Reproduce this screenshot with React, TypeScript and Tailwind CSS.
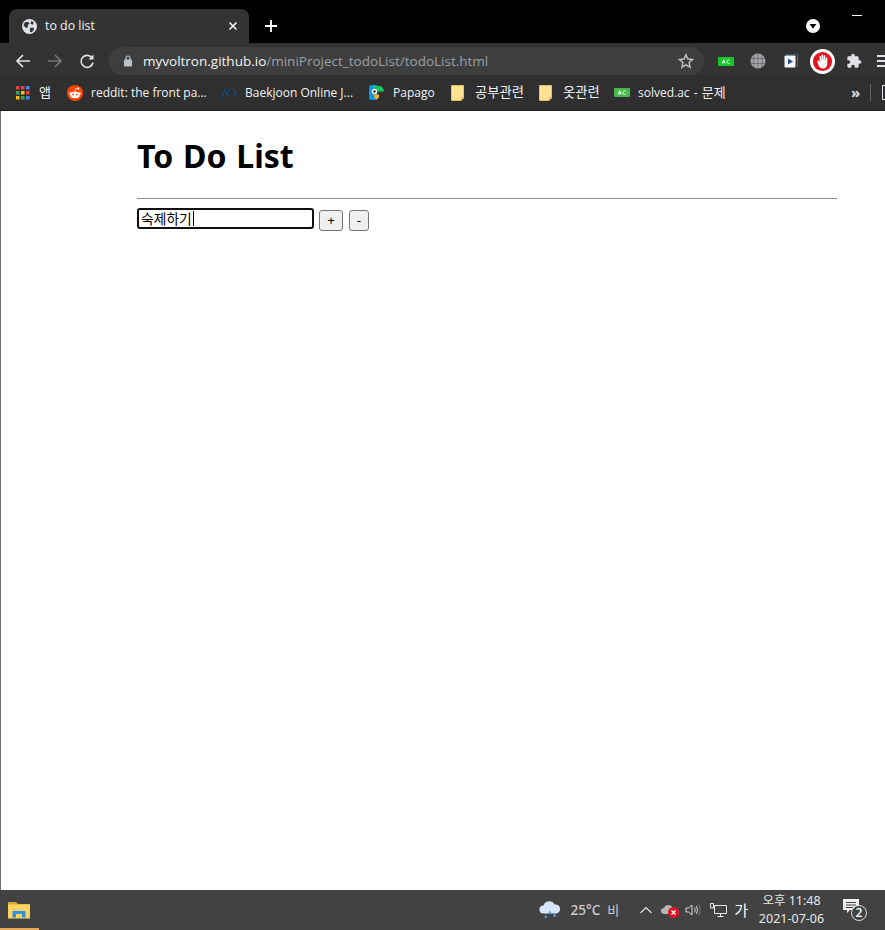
import React from "react";

const UI = { fontFamily: '"Open Sans", "Noto Sans CJK KR", sans-serif' };
const KR = { fontFamily: '"Noto Sans CJK KR", sans-serif' };
const NS = { fontFamily: '"Noto Sans", "Noto Sans CJK KR", sans-serif' };

function Folder() {
  return (
    <svg width="13" height="16" viewBox="0 0 13 16" className="shrink-0">
      <path d="M0.5 0.5H12.5V13L10 15.5H0.5Z" fill="#fde293" stroke="#e8c15c" />
      <path d="M12.5 12H9.500V15.500" fill="#e8c15c" />
    </svg>
  );
}

function AcBadge({ fill }: { fill: string }) {
  return (
    <svg width="16" height="9" viewBox="0 0 16 9" className="shrink-0">
      <rect width="16" height="9" rx="1" fill={fill} />
      <path d="M4.200 6.600 5.700 2.600 7.200 6.600M4.800 5.300H6.600" stroke="#fff" strokeWidth="0.9" fill="none" />
      <path d="M11.600 3.100A1.800 1.800 0 1 0 11.600 6.100" stroke="#fff" strokeWidth="0.9" fill="none" />
    </svg>
  );
}

function Bookmark({ icon, label, gap, width, text = "text-[12px]" }: { icon: React.ReactNode; label: React.ReactNode; gap: string; width: string; text?: string }) {
  return (
    <div className={`flex items-center shrink-0 ${gap} ${width}`}>
      {icon}
      <span className={`whitespace-nowrap text-[#f1f3f4] ${text}`}>{label}</span>
    </div>
  );
}

export default function App() {
  return (
    <div className="flex h-[930px] w-[885px] flex-col overflow-hidden bg-black" style={UI}>
      {/* tab strip */}
      <div className="flex h-[43px] shrink-0 items-end bg-black pl-[9px]">
        <div className="flex h-[34px] w-[240px] items-center rounded-t-[8px] bg-[#333333] pl-[13px] pr-[8px]">
          <svg width="15" height="15" viewBox="0 0 16 16" className="shrink-0">
            <circle cx="8" cy="8" r="8" fill="#dee1e6" />
            <path d="M3 3.500 6.500 3 8 5 6 6.500 6.500 8.500 4.500 9.500 1.500 7ZM10 2 12.500 3.500 11.500 6 9 5ZM8.500 9.500 12 9 13 11 10.500 14 8.500 13.500Z" fill="#333333" />
          </svg>
          <span className="ml-[8px] flex-1 text-[12.4px] text-[#f1f3f4]">to do list</span>
          <svg width="16" height="16" viewBox="0 0 16 16" className="shrink-0">
            <path d="M4.500 4.500 11.500 11.500M11.500 4.500 4.500 11.500" stroke="#f1f3f4" strokeWidth="1.600" />
          </svg>
        </div>
        <div className="flex h-[34px] items-center pl-[15px]">
          <svg width="14" height="14" viewBox="0 0 14 14">
            <path d="M7 1V13M1 7H13" stroke="#fff" strokeWidth="1.800" />
          </svg>
        </div>
        <div className="flex-1" />
        <div className="flex h-[43px] w-[79px] shrink-0">
          <div className="flex h-full w-[42px] items-end pb-[10px]">
            <svg width="14" height="14" viewBox="0 0 14 14">
              <circle cx="7" cy="7" r="7" fill="#fff" />
              <path d="M3.600 5 10.400 5 7 9.800Z" fill="#000" />
            </svg>
          </div>
          <div className="ml-[4px] mt-[15px] h-px w-[10px] bg-white" />
        </div>
      </div>

      {/* toolbar */}
      <div className="flex h-[32px] shrink-0 items-center bg-[#333333] pl-[15px] pt-[4px]">
        <svg width="16" height="16" viewBox="0 0 16 16" className="shrink-0">
          <path d="M15 8H2M8 2 2 8 8 14" stroke="#dee1e6" strokeWidth="1.700" fill="none" />
        </svg>
        <svg width="16" height="16" viewBox="0 0 16 16" className="ml-[16px] shrink-0">
          <path d="M1 8H14M8 2 14 8 8 14" stroke="#75777a" strokeWidth="1.700" fill="none" />
        </svg>
        <svg width="16" height="16" viewBox="0 0 16 16" className="ml-[16px] shrink-0">
          <path d="M13.200 5.200A6 6 0 1 0 14 9.500" stroke="#dee1e6" strokeWidth="1.600" fill="none" />
          <path d="M14.500 1.500V6.500H9.500Z" fill="#dee1e6" />
        </svg>
        <div className="ml-[14px] flex h-[28px] w-[595px] shrink-0 items-center rounded-full bg-[#3e3e3e] pl-[14px] pr-[10px]">
          <svg width="10" height="12" viewBox="0 0 10 12" className="shrink-0">
            <rect x="1" y="4.500" width="8" height="7" rx="1" fill="#bdc1c6" />
            <path d="M3 5V3A2 2 0 0 1 7 3V5" stroke="#bdc1c6" strokeWidth="1.200" fill="none" />
          </svg>
          <span className="ml-[10px] flex-1 whitespace-nowrap text-[13.5px]">
            <span className="text-[#f1f3f4]">myvoltron.github.io</span>
            <span className="text-[#9aa0a6]">/miniProject_todoList/todoList.html</span>
          </span>
          <svg width="16" height="16" viewBox="0 0 24 24" className="shrink-0">
            <path d="M12 2.500 14.900 9 22 9.700 16.600 14.400 18.200 21.500 12 17.800 5.800 21.500 7.400 14.400 2 9.700 9.100 9Z" fill="none" stroke="#c4c7cb" strokeWidth="2" />
          </svg>
        </div>
        <div className="ml-[14px] flex items-center">
          <AcBadge fill="#13c72a" />
          <svg width="16" height="16" viewBox="0 0 16 16" className="ml-[16px] shrink-0">
            <circle cx="8" cy="8" r="7.500" fill="#a4a6a8" />
            <path d="M0.500 5.500H15.500M0.500 10.500H15.500M8 .5V15.500M4.500 1.500Q2.500 8 4.500 14.500M11.500 1.500Q13.500 8 11.500 14.500" stroke="#5f6164" strokeWidth="0.700" fill="none" />
          </svg>
          <svg width="14" height="14" viewBox="0 0 14 14" className="ml-[18px] shrink-0">
            <rect x="0.500" y="1.500" width="11" height="12" rx="1" fill="#f4f6f8" />
            <path d="M1 1.500 3 0H12.500L13.500 1V13" stroke="#3b6ea8" fill="none" />
            <path d="M4 4.500 9 7.500 4 10.500Z" fill="#1c4f9c" />
          </svg>
          <svg width="25" height="25" viewBox="0 0 26 26" className="ml-[12px] shrink-0">
            <circle cx="13" cy="13" r="13" fill="#fff" />
            <circle cx="13" cy="13" r="10" fill="#e3141c" />
            <path d="M7.500 12.500 8.800 11.800 10 14V7.800C10 6.600 11.500 6.600 11.500 7.800V11H12V6.500C12 5.300 13.700 5.300 13.700 6.500V11H14.200V7.300C14.200 6.100 15.900 6.100 15.900 7.300V12H16.400V9.300C16.400 8.200 18 8.200 18 9.300V15.500C18 18.300 16 20.300 13.200 20.300 11 20.300 9.500 19 8.800 17Z" fill="#fff" />
          </svg>
          <svg width="16" height="16" viewBox="0 0 24 24" className="ml-[11px] shrink-0">
            <path d="M20.500 11H19V7C19 5.900 18.100 5 17 5H13V3.500C13 2.100 11.900 1 10.500 1S8 2.100 8 3.500V5H4C2.900 5 2 5.900 2 7V10.800H3.500C5 10.800 6.200 12 6.200 13.500S5 16.200 3.500 16.200H2V20C2 21.100 2.900 22 4 22H7.800V20.500C7.800 19 9 17.800 10.500 17.800S13.200 19 13.200 20.500V22H17C18.100 22 19 21.100 19 20V16H20.500C21.900 16 23 14.900 23 13.500S21.900 11 20.500 11Z" fill="#dee1e6" />
          </svg>
          <div className="ml-[15px] flex w-[8px] flex-col gap-[3px] self-center">
            <div className="h-[2px] w-[8px] bg-[#dee1e6]" />
            <div className="h-[2px] w-[8px] bg-[#dee1e6]" />
            <div className="h-[2px] w-[8px] bg-[#dee1e6]" />
          </div>
        </div>
      </div>

      {/* bookmarks */}
      <div className="flex h-[36px] shrink-0 items-center border-b border-[#1c1c1c] bg-[#2f2f2f] pl-[16px]">
        <svg width="14" height="14" viewBox="0 0 14 14" className="shrink-0">
          {[0, 5, 10].flatMap((y, r) =>
            [0, 5, 10].map((x, c) => (
              <rect key={`${r}${c}`} x={x} y={y} width="3.500" height="3.500" fill={[["#ea4335", "#ea4335", "#4285f4"], ["#34a853", "#fbbc05", "#ea4335"], ["#fbbc05", "#34a853", "#4285f4"]][r][c]} />
            ))
          )}
        </svg>
        <span className="ml-[9px] w-[28px] shrink-0 text-[13px] text-[#f1f3f4]">앱</span>
        <Bookmark
          width="w-[154px]"
          gap="gap-[8px]"
          label="reddit: the front pa..."
          icon={
            <svg width="16" height="16" viewBox="0 0 16 16" className="shrink-0">
              <circle cx="8" cy="8" r="8" fill="#ff4500" />
              <ellipse cx="8" cy="10" rx="4.800" ry="3.200" fill="#fff" />
              <circle cx="3.500" cy="8.500" r="1.200" fill="#fff" />
              <circle cx="12.500" cy="8.500" r="1.200" fill="#fff" />
              <circle cx="11.300" cy="3.600" r="1.100" fill="#fff" />
              <path d="M8 7 8.600 3.500 11 3.800" stroke="#fff" strokeWidth="0.700" fill="none" />
              <circle cx="6.200" cy="9.500" r="0.900" fill="#ff4500" />
              <circle cx="9.800" cy="9.500" r="0.900" fill="#ff4500" />
            </svg>
          }
        />
        <Bookmark
          width="w-[148px]"
          gap="gap-[8px]"
          label="Baekjoon Online J..."
          icon={
            <svg width="16" height="12" viewBox="0 0 16 12" className="shrink-0">
              <path d="M4.500 1 1 11M9 2 5.500 6 9 10M12 2 15.500 6 12 10" stroke="#0f4c81" strokeWidth="1.200" fill="none" />
            </svg>
          }
        />
        <Bookmark
          width="w-[82px]"
          gap="gap-[9px]"
          label="Papago"
          icon={
            <svg width="15" height="15" viewBox="0 0 15 15" className="shrink-0">
              <path d="M3 0H8V15H2C.8 15 0 14.200 0 13V3C0 1.200 1.200 0 3 0Z" fill="#0a95e8" />
              <path d="M3 1H10C13 1 14.500 3 15 6.500H8L6 4.500Z" fill="#14c95c" />
              <circle cx="5.500" cy="6.500" r="2.800" fill="#fff" />
              <circle cx="5.500" cy="6.500" r="1.200" fill="#123" />
              <path d="M5 9.500H10V12.500L7.500 14.500 5.500 13Z" fill="#f6b81a" />
            </svg>
          }
        />
        <Bookmark width="w-[88px]" gap="gap-[11px]" text="text-[13.300px]" label="공부관련" icon={<Folder />} />
        <Bookmark width="w-[75px]" gap="gap-[11px]" text="text-[13.300px]" label="옷관련" icon={<Folder />} />
        <Bookmark
          width="w-[237px]"
          gap="gap-[8px]"
          label={
            <span className="[word-spacing:1px]">
              solved.ac - <span className="text-[13px]">문제</span>
            </span>
          }
          icon={<AcBadge fill="#49b84c" />}
        />
        <span className="w-[19px] shrink-0 text-[15px] font-bold leading-none text-[#dee1e6]">»</span>
        <div className="h-[17px] w-px shrink-0 bg-[#5f6368]" />
        <div className="ml-[11px] h-[15px] w-[6px] shrink-0 border-y border-l border-[#dee1e6]" />
      </div>

      {/* page */}
      <div className="flex min-h-0 flex-1 border-l border-[#6e6e6e] bg-white">
        <div className="ml-[136px] w-[700px] pt-[21px]" style={NS}>
          <h1 className="text-[32px] font-bold leading-[48px] text-black [word-spacing:1.500px]">To Do List</h1>
          <hr className="mt-[18px] border-0 border-t border-[#8c8c8c]" />
          <div className="mt-[9px] flex items-start">
            <div className="flex h-[21px] w-[177px] items-center rounded-[3px] border-2 border-[#101010] pl-[2px] text-[13.800px] leading-none text-black" style={KR}>
              숙제하기<span className="ml-px h-[15px] w-px bg-black" />
            </div>
            <button className="ml-[5px] mt-[2px] h-[21px] w-[24px] rounded-[3px] border border-[#767676] bg-[#efefef] text-[13.300px] leading-none text-black">+</button>
            <button className="ml-[6px] mt-[2px] h-[21px] w-[20px] rounded-[3px] border border-[#767676] bg-[#efefef] text-[13.300px] leading-none text-black">-</button>
          </div>
        </div>
      </div>

      {/* taskbar */}
      <div className="flex h-[40px] shrink-0 items-center bg-[#424242]">
        <div className="flex h-full w-[39px] shrink-0 flex-col justify-between border-b-[2px] border-[#e5a95b] pl-[8px] pt-[11px]">
          <svg width="22" height="18" viewBox="0 0 22 18">
            <path d="M0 1H8L10 3H22V17H0Z" fill="#e0a92e" />
            <rect y="3.500" width="22" height="14" fill="#fdd464" />
            <path d="M4.500 16.500V10H17.500V16.500H14V13H8V16.500Z" fill="#2f8fe0" />
          </svg>
        </div>
        <div className="flex flex-1 items-center justify-end">
          <svg width="22" height="20" viewBox="0 0 22 20" className="shrink-0">
            <path d="M4.500 13.500A4 4 0 0 1 4.500 5.500 6 6 0 0 1 15.500 4.500 4.500 4.500 0 0 1 17.500 13.500Z" fill="#d6e8f7" />
            <path d="M7 14.500 5.500 17 6.500 18.500 8 17.500ZM15.500 13 14 16 15.500 17 17 16Z M11 10.500 9.500 13 11 14 12.500 13Z" fill="#4fa3ea" />
          </svg>
          <span className="ml-[9px] text-[13.500px] font-medium text-[#cfcfcf]" style={NS}>25°C</span>
          <span className="ml-[7px] text-[13px] text-[#cfcfcf]" style={KR}>비</span>
          <svg width="12" height="8" viewBox="0 0 12 8" className="ml-[21px] shrink-0">
            <path d="M.5 7 6 1.500 11.500 7" stroke="#e8e8e8" strokeWidth="1.100" fill="none" />
          </svg>
          <div className="relative ml-[9px] h-[14px] w-[18px] shrink-0">
            <svg width="14" height="10" viewBox="0 0 14 10" className="mt-[1px]">
              <path d="M3 10A3 3 0 0 1 3 4 4.500 4.500 0 0 1 11.500 4 3 3 0 0 1 11.500 10Z" fill="#b5b5b5" />
            </svg>
            <svg width="11" height="11" viewBox="0 0 11 11" className="absolute left-[7px] top-[4px]">
              <circle cx="5.500" cy="5.500" r="5.500" fill="#e81123" />
              <path d="M3.500 3.500 7.500 7.500M7.500 3.500 3.500 7.500" stroke="#fff" strokeWidth="1.300" />
            </svg>
          </div>
          <svg width="17" height="14" viewBox="0 0 17 14" className="ml-[6px] shrink-0">
            <path d="M1 5H3.500L7 2V12L3.500 9H1Z M9.500 4.500Q11 7 9.500 9.500M11.500 3Q13.500 7 11.500 11" stroke="#e8e8e8" strokeWidth="0.900" fill="none" />
            <path d="M14 1.500Q16.500 7 14 12.500" stroke="#777" strokeWidth="0.900" fill="none" />
          </svg>
          <svg width="17" height="15" viewBox="0 0 17 15" className="ml-[8px] shrink-0">
            <path d="M4.500 2.500H16.500V10.500H4.500ZM10.500 10.500V13.500M7.500 13.500H13.500M.5 .5H3.500V5H.5Z" stroke="#e8e8e8" strokeWidth="1" fill="none" />
          </svg>
          <span className="ml-[7px] text-[15px] text-white" style={KR}>가</span>
          <div className="ml-[10px] flex w-[67px] flex-col items-center text-[12.500px] leading-[18px] text-[#e8e8e8]" style={NS}>
            <span>오후 11:48</span>
            <span>2021-07-06</span>
          </div>
          <div className="relative ml-[18px] h-[22px] w-[25px] shrink-0">
            <svg width="17" height="15" viewBox="0 0 17 15">
              <path d="M0 0H16V11H7L4 14V11H0Z" fill="#efefef" />
              <path d="M3 3.500H13M3 6H13M3 8.500H10" stroke="#424242" strokeWidth="1" />
            </svg>
            <div className="absolute left-[8px] top-[6px] flex h-[16px] w-[16px] items-center justify-center rounded-full border border-[#ddd] bg-[#424242] text-[12px] font-semibold leading-none text-white">2</div>
          </div>
          <div className="ml-[12px] h-full w-px shrink-0 self-stretch bg-[#6a6a6a]" />
          <div className="w-[4px] shrink-0" />
        </div>
      </div>
    </div>
  );
}
